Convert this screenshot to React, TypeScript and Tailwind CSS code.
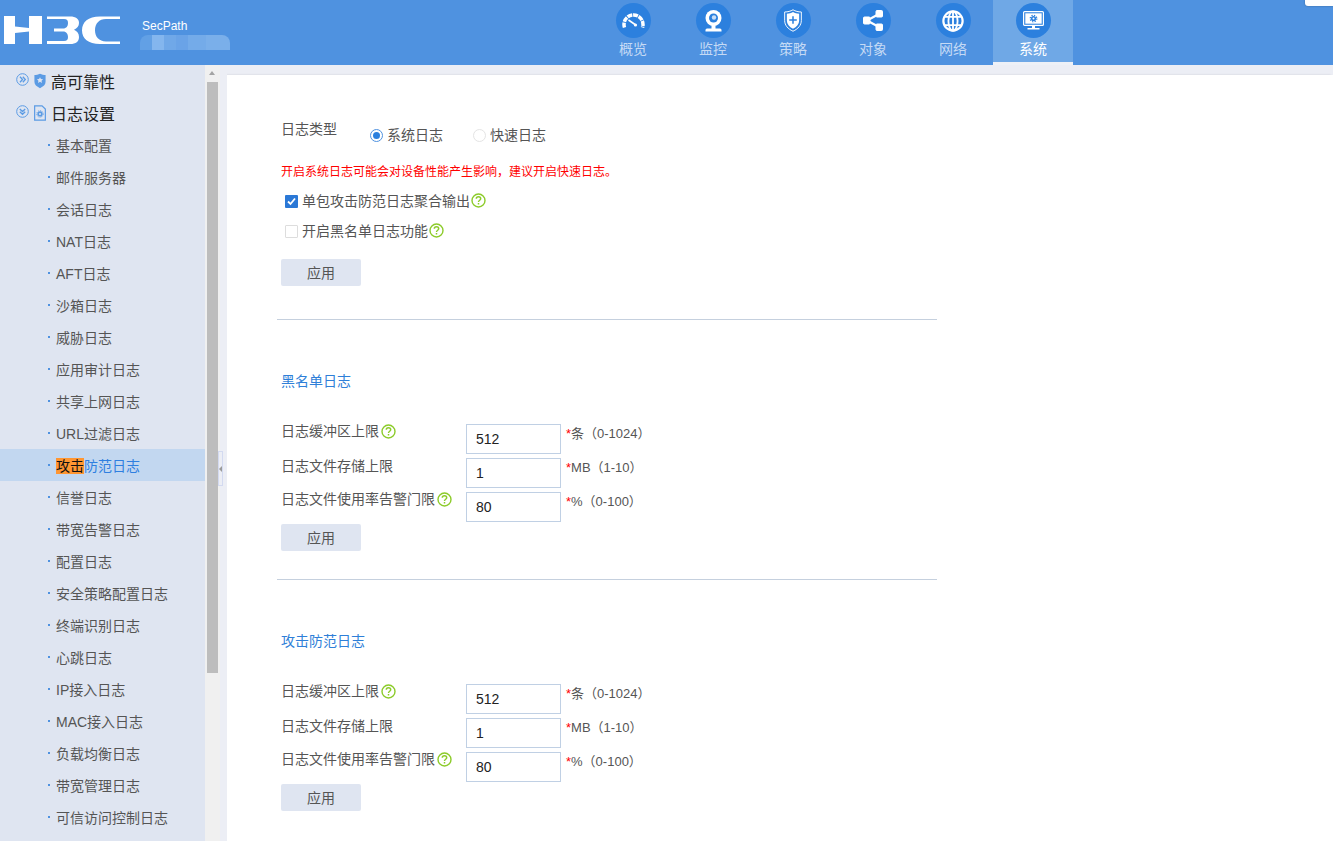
const font = "font-['Liberation_Sans','Noto_Sans_CJK_SC',sans-serif]";

const menuItems = [
  "基本配置", "邮件服务器", "会话日志", "NAT日志", "AFT日志", "沙箱日志", "威胁日志", "应用审计日志",
  "共享上网日志", "URL过滤日志", "攻击防范日志", "信誉日志", "带宽告警日志", "配置日志", "安全策略配置日志",
  "终端识别日志", "心跳日志", "IP接入日志", "MAC接入日志", "负载均衡日志", "带宽管理日志", "可信访问控制日志",
];

function H3CLogo() {
  return (
    <svg width="118" height="29" viewBox="0 0 118 29" fill="#fff" fillRule="evenodd">
      <path d="M0 0h11v10.500l14 1.500V0h13v28H25V15.500l-14 1.500V28H0z" />
      <path d="M43 .5H66C72 .5 75 3 75 7C75 10 73 12.500 70 13.800C73 15 75 17.500 75 21C75 25.500 72 28 66 28H43V25H60C63 25 64 23.500 64 21C64 18 62.500 15.500 59 15.500H50V12.500H59C62.500 12.500 64 10 64 7C64 4.500 63 3 60 3H43Z" />
      <path d="M116 .5H96C84 .5 78 6 78 14.300S84 28 96 28H116V25.500H102C95 25.500 91 20.800 91 14.300S95 3 102 3H116Z" />
    </svg>
  );
}

function GaugeIcon() {
  return (
    <svg width="23" height="17" viewBox="0 0 23 17" fill="none" stroke="#fff">
      <path d="M2.500 15.500A9.500 9.500 0 1 1 20.500 15.500" strokeWidth="3.500" strokeDasharray="5 .8" />
      <path d="M6.500 8l6.500 4.500" strokeWidth="1.600" />
      <circle cx="13.500" cy="13" r="1.600" fill="#fff" stroke="none" />
    </svg>
  );
}

function CameraIcon() {
  return (
    <svg width="17" height="22" viewBox="0 0 17 22">
      <circle cx="8.500" cy="8" r="8" fill="#fff" />
      <circle cx="8.500" cy="8" r="4.500" fill="#2c80de" />
      <circle cx="9" cy="7.500" r="2.200" fill="#fff" opacity=".75" />
      <path d="M6.500 15h4v3.500h4.500a1.500 1.500 0 0 1 1.500 1.500v1.500H.5V20A1.500 1.500 0 0 1 2 18.500h4.500z" fill="#fff" />
    </svg>
  );
}

function ShieldIcon() {
  return (
    <svg width="18" height="23" viewBox="0 0 19 24" fill="none" stroke="#fff">
      <path d="M9.500 .7C7 2.200 4 3 .7 3v9c0 5 3.500 9 8.800 11.300C14.800 21 18.300 17 18.300 12V3c-3.300 0-6.300-.8-8.800-2.300z" strokeWidth="1" />
      <path d="M9.500 3C7.500 4 5.500 4.700 3 5v7c0 3.800 2.500 6.800 6.500 8.700 4-1.900 6.500-4.900 6.500-8.700V5c-2.500-.3-4.500-1-6.500-2z" fill="#fff" stroke="none" />
      <path d="M9.500 7.500v8M5.500 11.500h8" stroke="#2c80de" strokeWidth="1.600" />
    </svg>
  );
}

function ShareIcon() {
  return (
    <svg width="20" height="21" viewBox="0 0 20 21" fill="#fff" stroke="#fff">
      <path d="M4 10.500L16 4M4 10.500L16 17" strokeWidth="2.200" fill="none" />
      <rect x=".5" y="7" width="6.500" height="7" rx="1" />
      <rect x="13" y=".5" width="6.500" height="6.500" rx="1" />
      <rect x="13" y="14" width="6.500" height="6.500" rx="1" />
    </svg>
  );
}

function GlobeIcon() {
  return (
    <svg width="22" height="22" viewBox="0 0 24 24" fill="none" stroke="#fff" strokeWidth="2">
      <circle cx="12" cy="12" r="10.500" strokeWidth="2.400" />
      <ellipse cx="12" cy="12" rx="5" ry="10.500" />
      <path d="M12 1.500v21M3 7.500h18M3 16.500h18" />
    </svg>
  );
}

function MonitorIcon() {
  return (
    <svg width="21" height="19" viewBox="0 0 21 19" fill="none">
      <rect x=".6" y=".6" width="19.800" height="13.800" rx="1" stroke="#fff" strokeWidth="1.200" />
      <rect x="2.300" y="2.300" width="16.400" height="10.400" fill="#fff" />
      <circle cx="10.500" cy="7.500" r="1.800" stroke="#2c80de" strokeWidth="1.600" />
      <circle cx="10.500" cy="7.500" r="3.300" stroke="#2c80de" strokeWidth="1.200" strokeDasharray="1.300 1.300" />
      <path d="M9 15h3v2H9zM4.500 17h12v1.500h-12z" fill="#fff" />
    </svg>
  );
}

function HelpIcon() {
  return (
    <svg width="15" height="15" viewBox="0 0 15 15" fill="none" stroke="#8ccb2a" className="shrink-0">
      <circle cx="7.500" cy="7.500" r="6.500" strokeWidth="1.400" />
      <path d="M5.300 5.800c0-1.300 1-2.100 2.200-2.100s2.200.8 2.200 2c0 1.500-2.200 1.600-2.200 3.300" strokeWidth="1.500" />
      <path d="M7.500 10v1.500" strokeWidth="1.500" />
    </svg>
  );
}

function Chevrons({ down }: { down?: boolean }) {
  return (
    <svg width="13" height="13" viewBox="0 0 13 13" fill="none" stroke="#5b9be4" className="shrink-0">
      <circle cx="6.500" cy="6.500" r="5.800" strokeWidth="1" />
      <path
        d={down ? "M3.800 4l2.700 2.500L9.200 4M3.800 6.800l2.700 2.500 2.700-2.500" : "M4 3.800l2.500 2.700L4 9.200M6.800 3.800l2.500 2.700-2.500 2.700"}
        strokeWidth="1.300"
      />
    </svg>
  );
}

const navItems = [
  { label: "概览", icon: <GaugeIcon /> },
  { label: "监控", icon: <CameraIcon /> },
  { label: "策略", icon: <ShieldIcon /> },
  { label: "对象", icon: <ShareIcon /> },
  { label: "网络", icon: <GlobeIcon /> },
  { label: "系统", icon: <MonitorIcon />, active: true },
];

function Header() {
  return (
    <header className="relative flex h-[65px] shrink-0 bg-[#4f92e0]">
      <div className="w-[593px] shrink-0 flex pl-1 pt-4">
        <H3CLogo />
        <div className="ml-5">
          <div className="text-[12px] leading-[20px] text-white">SecPath</div>
          <div className="flex h-[15px] w-[90px] -ml-[2px] mt-[-1px] overflow-hidden rounded-t-[8px]">
            <span className="w-[12px] bg-[#62a0e5]" />
            <span className="w-[12px] bg-[#84b6ee]" />
            <span className="w-[12px] bg-[#70a8e8]" />
            <span className="w-[12px] bg-[#6aa3e7]" />
            <span className="w-[18px] bg-[#74abe9]" />
            <span className="flex-1 bg-[#7aafea]" />
          </div>
        </div>
      </div>
      {navItems.map((item) => (
        <div
          key={item.label}
          className={`flex h-[65px] w-[80px] flex-col items-center pt-[3px] ${
            item.active ? "border-b-[3px] border-[#eef1f7] bg-[#6fa8e6] text-white" : "text-[#c5daf5]"
          }`}
        >
          <div className="flex h-[35px] w-[35px] items-center justify-center rounded-full bg-[#2c80de]">{item.icon}</div>
          <span className="mt-[1px] text-[14px] leading-[20px]">{item.label}</span>
        </div>
      ))}
      <div className="absolute right-0 top-0 h-[6px] w-[28px] rounded-bl-[3px] bg-white shadow-[0_0_2px_rgba(0,0,0,0.35)]" />
    </header>
  );
}

function Sidebar() {
  return (
    <aside className="relative flex w-[227px] shrink-0 bg-[#eceef5]">
      <nav className="h-full w-[205px] shrink-0 overflow-hidden bg-[#dfe5f1]">
        <div className="flex h-[32px] items-start pl-[16px] pt-[8px] text-[16px] text-[#222]">
          <Chevrons />
          <svg width="12" height="16" viewBox="0 0 14 18" className="ml-[5px] shrink-0">
            <path d="M7 .5C5 1.500 2.500 2 .5 2v8c0 3.500 2.500 5.500 6.500 7.500 4-2 6.500-4 6.500-7.500V2C11.500 2 9 1.500 7 .5z" fill="#5b9be4" />
            <path d="M7 4.500l1.100 2.300 2.500.3-1.800 1.700.5 2.500L7 10l-2.300 1.300.5-2.500-1.800-1.700 2.500-.3z" fill="#dfe5f1" />
          </svg>
          <span className="ml-[5px] leading-[20px]">高可靠性</span>
        </div>
        <div className="flex h-[32px] items-start pl-[16px] pt-[8px] text-[16px] text-[#222]">
          <Chevrons down />
          <svg width="12" height="16" viewBox="0 0 13 17" fill="none" className="ml-[5px] shrink-0">
            <path d="M.7.7h8l3.600 3.600v12H.7z" stroke="#5b9be4" strokeWidth="1.300" />
            <circle cx="6.500" cy="9.500" r="2" stroke="#5b9be4" strokeWidth="1.800" />
            <circle cx="6.500" cy="9.500" r="3.500" stroke="#5b9be4" strokeWidth="1" strokeDasharray="1.300 1" />
          </svg>
          <span className="ml-[5px] leading-[20px]">日志设置</span>
        </div>
        {menuItems.map((item) => {
          const active = item === "攻击防范日志";
          return (
            <div
              key={item}
              className={`flex h-[32px] items-center pl-[48px] text-[14px] ${active ? "bg-[#c2d7f0] text-[#2f7fe0]" : "text-[#555]"}`}
            >
              <span className="mr-[6px] h-[2px] w-[2px] bg-[#4f92e0]" />
              {active ? (
                <span className="mt-[2px]">
                  <span className="bg-[#ff9632] text-[#111]">攻击</span>防范日志
                </span>
              ) : (
                <span className="mt-[2px]">{item}</span>
              )}
            </div>
          );
        })}
      </nav>

      <div className="relative h-full w-[15px] shrink-0 bg-[#f0f0f0] px-[2px] pt-[17px]">
        <span className="absolute left-[4px] top-[6px] h-0 w-0 border-x-[3.5px] border-b-[4px] border-x-transparent border-b-[#a3a3a3]" />
        <div className="h-[591px] w-[11px] bg-[#bdbdbd]" />
      </div>

      <div className="absolute left-[218px] top-[386px] flex h-[35px] w-[5px] items-center border border-[#d3daf0] bg-[#eceef5]">
        <span className="h-0 w-0 border-y-[3.5px] border-r-[3px] border-y-transparent border-r-[#9a9a9a]" />
      </div>
    </aside>
  );
}

function LimitRow({ label, help, value, hint }: { label: string; help?: boolean; value: string; hint: string }) {
  return (
    <div className="flex h-[34px] text-[14px]">
      <div className="-mt-px flex h-[30px] w-[185px] shrink-0 items-start gap-[2px] text-[#555]">
        <span className={`leading-[16px] ${help ? "" : "mt-px"}`}>{label}</span>
        {help && <span className="mt-px"><HelpIcon /></span>}
      </div>
      <input
        readOnly
        value={value}
        className="h-[30px] w-[95px] shrink-0 border border-[#c0d0e4] bg-white pl-[9px] text-[14px] text-[#222] outline-none"
      />
      <div className="ml-[5px] pt-[2px] text-[13px] leading-[16px] text-[#555]">
        <span className="text-[#f00]">*</span>
        {hint}
      </div>
    </div>
  );
}

function ApplyButton() {
  return (
    <button className="block h-[27px] w-[80px] rounded-[2px] bg-[#dfe5f1] pt-[2px] text-center text-[14px] text-[#555]">应用</button>
  );
}

function LimitSection({ title }: { title: string }) {
  return (
    <section className="h-[259px] pl-[4px]">
      <h3 className="pt-[51px] text-[14px] leading-[20px] font-normal text-[#2f7fd8]">{title}</h3>
      <div className="mt-[33px]">
        <LimitRow label="日志缓冲区上限" help value="512" hint="条（0-1024）" />
        <LimitRow label="日志文件存储上限" value="1" hint="MB（1-10）" />
        <LimitRow label="日志文件使用率告警门限" help value="80" hint="%（0-100）" />
      </div>
      <div className="-mt-[2px]"><ApplyButton /></div>
    </section>
  );
}

function Content() {
  return (
    <main className="mt-[10px] flex-1 overflow-hidden bg-white pl-[50px] shadow-[-2px_0_2px_rgba(0,0,0,0.12)]">
      <div className="w-[660px]">
        <section className="h-[245px] border-b border-[#c5d0de] pl-[4px] pt-[45px] text-[14px] text-[#555]">
          <div className="flex h-[20px]">
            <span className="w-[89px] leading-[18px]">日志类型</span>
            <label className="flex h-[30px] items-center">
              <span className="mr-[4px] flex h-[13px] w-[13px] items-center justify-center rounded-full border border-[#4f92e0] bg-white">
                <span className="h-[7px] w-[7px] rounded-full bg-[#2c80de]" />
              </span>
              系统日志
            </label>
            <label className="ml-[30px] flex h-[30px] items-center">
              <span className="mr-[4px] h-[13px] w-[13px] rounded-full border border-[#e4e4e4] bg-white" />
              快速日志
            </label>
          </div>
          <p className="mt-[23px] -ml-px pl-px text-[12px] leading-[18px] text-[#f00]">开启系统日志可能会对设备性能产生影响，建议开启快速日志。</p>
          <div className="mt-[5px] flex h-[30px] items-center pl-[4px]">
            <span className="mr-[4px] flex h-[13px] w-[13px] items-center justify-center rounded-[1px] bg-[#2b78d6]">
              <svg width="11" height="11" viewBox="0 0 11 11" fill="none" stroke="#fff" strokeWidth="1.800">
                <path d="M2 5.500l2.500 2.500L9 2.500" />
              </svg>
            </span>
            单包攻击防范日志聚合输出
            <span className="-mt-[2px] ml-[1px]"><HelpIcon /></span>
          </div>
          <div className="flex h-[30px] items-center pl-[4px]">
            <span className="mr-[4px] h-[13px] w-[13px] rounded-[1px] border border-[#ddd] bg-white" />
            开启黑名单日志功能
            <span className="-mt-[2px] ml-[1px]"><HelpIcon /></span>
          </div>
          <div className="mt-[13px]"><ApplyButton /></div>
        </section>
        <div className="border-b border-[#c5d0de]"><LimitSection title="黑名单日志" /></div>
        <LimitSection title="攻击防范日志" />
      </div>
    </main>
  );
}

export default function App() {
  return (
    <div className={`flex h-[841px] w-[1333px] flex-col overflow-hidden bg-[#eceef5] ${font}`}>
      <Header />
      <div className="flex min-h-0 flex-1">
        <Sidebar />
        <Content />
      </div>
    </div>
  );
}
